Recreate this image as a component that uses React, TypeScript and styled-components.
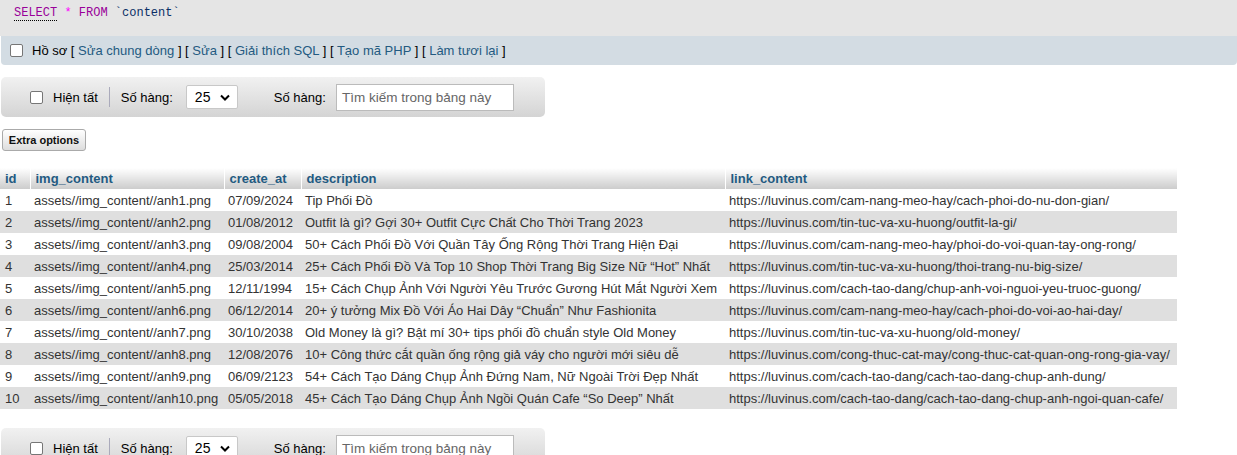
import React from "react";
import styled, { createGlobalStyle } from "styled-components";

const Global = createGlobalStyle`
  html, body { margin: 0; padding: 0; background: #fff; overflow: hidden; }
  body { font-family: "Liberation Sans", Arial, sans-serif; font-size: 13px; color: #444; }
`;

const Page = styled.div`
  display: flex;
  flex-direction: column;
  align-items: flex-start;
  padding-left: 1px;
  & > * {
    flex: none;
  }
`;

const QueryBox = styled.div`
  align-self: stretch;
  background: #e5e5e5;
  height: 36px;
  margin-left: -1px;
  padding: 6px 14px 0;
  box-sizing: border-box;
  font-family: "Liberation Mono", "Courier New", monospace;
  font-size: 12px;
  line-height: 14px;
  color: #235a81;
`;

const Kw = styled.span`
  color: #990099;
`;
const KwDotted = styled(Kw)`
  border-bottom: 1px dotted #000;
`;
const Op = styled.span`
  color: #ff00ff;
`;
const Tick = styled.span`
  color: #0a2f66;
`;

const Tools = styled.div`
  align-self: stretch;
  background: #d3dce3;
  height: 29px;
  border-radius: 0 0 4px 4px;
  display: flex;
  align-items: center;
  padding: 0 9px;
  gap: 9px;
  color: #000;
  font-size: 13px;
`;

const Links = styled.span`
  color: #000;
`;
const Lnk = styled.a`
  color: #235a81;
  text-decoration: none;
`;

const Box = styled.span`
  width: 11px;
  height: 11px;
  border: 1px solid #767676;
  border-radius: 2px;
  background: #fff;
  flex: none;
`;

const NavBar = styled.div<{ $top: number }>`
  margin-top: ${(p) => p.$top}px;
  width: 544px;
  height: 40px;
  border-radius: 5px;
  background: linear-gradient(#f1f1f1, #d4d4d4);
  display: flex;
  align-items: center;
  padding-left: 29px;
  box-sizing: border-box;
  color: #000;
  font-size: 13px;
`;

const NavLabel = styled.span<{ $ml: number }>`
  margin-left: ${(p) => p.$ml}px;
`;

const Sep = styled.span`
  width: 1px;
  height: 20px;
  background: #aab;
  margin-left: 11px;
`;

const Select = styled.div`
  margin-left: 13px;
  width: 52px;
  height: 24px;
  box-sizing: border-box;
  border: 1px solid #c8c8c8;
  border-radius: 2px;
  background: #fff;
  display: flex;
  align-items: center;
  justify-content: space-between;
  padding: 0 7px 0 8px;
  font-size: 14px;
  color: #000;
`;

const SearchInput = styled.div`
  margin-left: 10px;
  width: 178px;
  height: 27px;
  box-sizing: border-box;
  border: 1px solid #bbb;
  background: #fff;
  display: flex;
  align-items: center;
  padding-left: 5px;
  color: #666;
  font-size: 13.5px;
`;

const ExtraButton = styled.div`
  margin-top: 12px;
  margin-left: 1px;
  width: 84px;
  height: 22px;
  box-sizing: border-box;
  border: 1px solid #aaa;
  border-radius: 3px;
  background: linear-gradient(#fff, #ddd);
  display: flex;
  align-items: center;
  justify-content: center;
  font-size: 11px;
  font-weight: bold;
  color: #111;
`;

const Table = styled.table`
  margin-top: 17px;
  border-collapse: collapse;
  table-layout: fixed;
  width: 1177px;
  margin-left: -1px;
  font-size: 13px;
`;

const Th = styled.th`
  text-align: left;
  color: #235a81;
  font-weight: bold;
  height: 21px;
  padding: 0 0 0 5px;
  background: linear-gradient(#fff, #ccc);
  border-left: 1px solid #fff;
  white-space: nowrap;
  &:first-child {
    border-left: none;
  }
`;

const Tr = styled.tr<{ $even: boolean }>`
  background: ${(p) => (p.$even ? "#dfdfdf" : "#fff")};
`;

const Td = styled.td`
  height: 22px;
  padding: 0 0 0 4px;
  white-space: nowrap;
  overflow: hidden;
  color: #333;
  &:first-child {
    padding-left: 5px;
  }
`;

const rows = [
  ["1", "assets//img_content//anh1.png", "07/09/2024", "Tip Phối Đồ", "https://luvinus.com/cam-nang-meo-hay/cach-phoi-do-nu-don-gian/"],
  ["2", "assets//img_content//anh2.png", "01/08/2012", "Outfit là gì? Gợi 30+ Outfit Cực Chất Cho Thời Trang 2023", "https://luvinus.com/tin-tuc-va-xu-huong/outfit-la-gi/"],
  ["3", "assets//img_content//anh3.png", "09/08/2004", "50+ Cách Phối Đồ Với Quần Tây Ống Rộng Thời Trang Hiện Đại", "https://luvinus.com/cam-nang-meo-hay/phoi-do-voi-quan-tay-ong-rong/"],
  ["4", "assets//img_content//anh4.png", "25/03/2014", "25+ Cách Phối Đồ Và Top 10 Shop Thời Trang Big Size Nữ “Hot” Nhất", "https://luvinus.com/tin-tuc-va-xu-huong/thoi-trang-nu-big-size/"],
  ["5", "assets//img_content//anh5.png", "12/11/1994", "15+ Cách Chụp Ảnh Với Người Yêu Trước Gương Hút Mắt Người Xem", "https://luvinus.com/cach-tao-dang/chup-anh-voi-nguoi-yeu-truoc-guong/"],
  ["6", "assets//img_content//anh6.png", "06/12/2014", "20+ ý tưởng Mix Đồ Với Áo Hai Dây “Chuẩn” Như Fashionita", "https://luvinus.com/cam-nang-meo-hay/cach-phoi-do-voi-ao-hai-day/"],
  ["7", "assets//img_content//anh7.png", "30/10/2038", "Old Money là gì? Bật mí 30+ tips phối đồ chuẩn style Old Money", "https://luvinus.com/tin-tuc-va-xu-huong/old-money/"],
  ["8", "assets//img_content//anh8.png", "12/08/2076", "10+ Công thức cắt quần ống rộng giả váy cho người mới siêu dễ", "https://luvinus.com/cong-thuc-cat-may/cong-thuc-cat-quan-ong-rong-gia-vay/"],
  ["9", "assets//img_content//anh9.png", "06/09/2123", "54+ Cách Tạo Dáng Chụp Ảnh Đứng Nam, Nữ Ngoài Trời Đẹp Nhất", "https://luvinus.com/cach-tao-dang/cach-tao-dang-chup-anh-dung/"],
  ["10", "assets//img_content//anh10.png", "05/05/2018", "45+ Cách Tạo Dáng Chụp Ảnh Ngồi Quán Cafe “So Deep” Nhất", "https://luvinus.com/cach-tao-dang/cach-tao-dang-chup-anh-ngoi-quan-cafe/"],
];

const Chevron = () => (
  <svg width="10" height="7" viewBox="0 0 10 7">
    <path d="M1 1.5 L5 5.5 L9 1.5" fill="none" stroke="#000" strokeWidth="2" />
  </svg>
);

const Navigation = ({ top }: { top: number }) => (
  <NavBar $top={top}>
    <Box />
    <NavLabel $ml={10}>Hiện tất</NavLabel>
    <Sep />
    <NavLabel $ml={11}>Số hàng:</NavLabel>
    <Select>
      <span>25</span>
      <Chevron />
    </Select>
    <NavLabel $ml={36}>Số hàng:</NavLabel>
    <SearchInput>Tìm kiếm trong bảng này</SearchInput>
  </NavBar>
);

export default function App() {
  return (
    <>
      <Global />
      <Page>
        <QueryBox>
          <KwDotted>SELECT</KwDotted> <Op>*</Op> <Kw>FROM</Kw> <Tick>`content`</Tick>
        </QueryBox>
        <Tools>
          <Box />
          <Links>
            Hồ sơ [ <Lnk>Sửa chung dòng</Lnk> ] [ <Lnk>Sửa</Lnk> ] [ <Lnk>Giải thích SQL</Lnk> ] [{" "}
            <Lnk>Tạo mã PHP</Lnk> ] [ <Lnk>Làm tươi lại</Lnk> ]
          </Links>
        </Tools>
        <Navigation top={12} />
        <ExtraButton>Extra options</ExtraButton>
        <Table>
          <colgroup>
            <col style={{ width: 30 }} />
            <col style={{ width: 194 }} />
            <col style={{ width: 77 }} />
            <col style={{ width: 424 }} />
            <col style={{ width: 452 }} />
          </colgroup>
          <thead>
            <tr>
              <Th>id</Th>
              <Th>img_content</Th>
              <Th>create_at</Th>
              <Th>description</Th>
              <Th>link_content</Th>
            </tr>
          </thead>
          <tbody>
            {rows.map((r, i) => (
              <Tr key={r[0]} $even={i % 2 === 1}>
                {r.map((c, j) => (
                  <Td key={j}>{c}</Td>
                ))}
              </Tr>
            ))}
          </tbody>
        </Table>
        <Navigation top={19} />
      </Page>
    </>
  );
}
